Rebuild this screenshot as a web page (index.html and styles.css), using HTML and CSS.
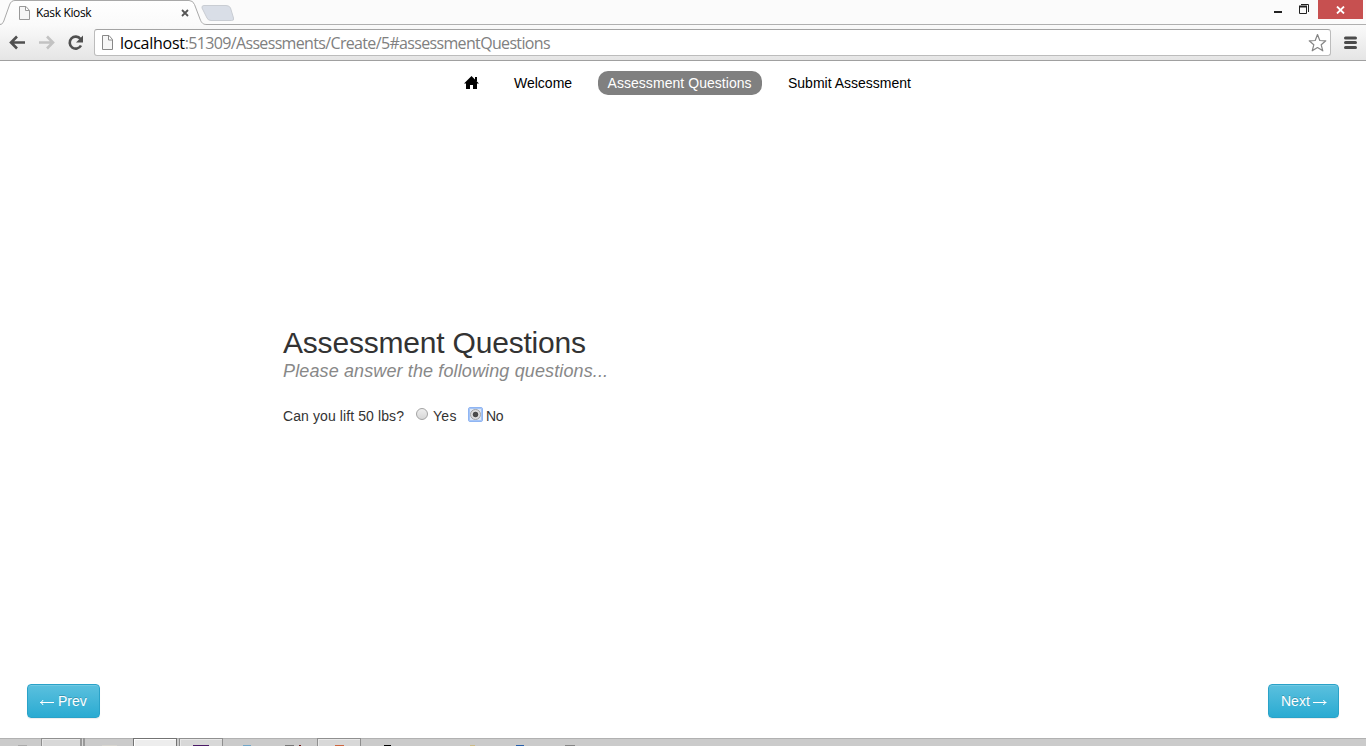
FILE: index.html
```html
<!DOCTYPE html>
<html lang="en">
<head>
<meta charset="utf-8">
<title>Kask Kiosk</title>
<link rel="stylesheet" href="styles.css">
</head>
<body>
<header class="browser">
  <div class="tabstrip">
    <svg class="tab-shape" width="240" height="25" viewBox="0 0 240 25">
      <defs><linearGradient id="tabfill" x1="0" y1="0" x2="0" y2="1"><stop offset="0" stop-color="#fff"/><stop offset="1" stop-color="#fafafa"/></linearGradient></defs>
      <path d="M202 8Q201.500 5.500 204 5.500H226Q229.500 5.500 230.500 8L233.500 18Q234.500 20.500 231.500 20.500H211Q208 20.500 207 18Z" fill="#d9dee7" stroke="#c9cdd3"/>
      <path d="M0 25C3 24 3.500 22 4.500 19L9.500 5Q11 .5 15 .5H189Q193 .5 194.500 4.500L200 19C201.500 23 203 24.500 207 24.500V25Z" fill="url(#tabfill)"/>
      <path d="M0 24.500C3 24 3.500 22 4.500 19L9.500 5Q11 .5 15 .5H189Q193 .5 194.500 4.500L200 19C201.500 23 203 24.500 207 24.500H240" fill="none" stroke="#a9a9a9"/>
    </svg>
    <div class="tab">
      <svg class="tab-page" width="12" height="14" viewBox="0 0 12 14"><path d="M.5.500H7L10.500 4.500V13.500H.5ZM6.500.500V4.500H10.500" fill="#f6f6f6" stroke="#999"/></svg>
      <span class="tab-title">Kask Kiosk</span>
      <svg class="tab-close" width="8" height="8" viewBox="0 0 8 8"><path d="M1 1L7 7M7 1L1 7" stroke="#555" stroke-width="1.800"/></svg>
    </div>
    <div class="window-buttons">
      <svg width="48" height="19" viewBox="0 0 48 19"><path d="M4 11H12V13H4Z" fill="#222"/><path d="M29.500 6.500H36.500V13.500H29.500ZM31 4.500H38.500V12" fill="none" stroke="#222"/><path d="M29 6.500H37" stroke="#222" stroke-width="2"/></svg>
      <div class="window-close"><svg width="9" height="8" viewBox="0 0 9 8"><path d="M1 .5L8 7.500M8 .5L1 7.500" stroke="#fff" stroke-width="1.800"/></svg></div>
    </div>
  </div>
  <div class="toolbar">
    <svg class="nav-icons" width="94" height="36" viewBox="0 0 94 36">
      <path d="M25 17.500H11M17 11.500L11 17.500L17 23.500" fill="none" stroke="#505050" stroke-width="2.600"/>
      <path d="M39 17.500H53M47 11.500L53 17.500L47 23.500" fill="none" stroke="#c2c2c2" stroke-width="2.600"/>
      <path d="M80.500 14A6 6 0 1 0 81 20.500" fill="none" stroke="#505050" stroke-width="2.600"/>
      <path d="M83 10.500V17.500H76Z" fill="#505050"/>
    </svg>
    <div class="address">
      <svg class="address-page" width="12" height="16" viewBox="0 0 12 16"><path d="M.5.500H7L10.500 4.500V14.500H.5ZM6.500.500V5H10.500" fill="#f6f6f6" stroke="#888"/></svg>
      <span class="url"><span class="host">localhost</span>:51309/Assessments/Create/5#assessmentQuestions</span>
      <svg class="star" width="20" height="20" viewBox="0 0 20 20"><path d="M10.500 1.500L12.800 7.500L18.800 7.800L14.200 11.800L15.800 17.800L10.500 14.600L5.200 17.800L6.800 11.800L2.200 7.800L8.200 7.500Z" fill="#fff" stroke="#858585" stroke-width="1.200" stroke-linejoin="round"/></svg>
    </div>
    <svg class="menu" width="14" height="14" viewBox="0 0 14 14"><path d="M2.500 2H12.500M2.500 6.500H12.500M2.500 11.500H12.500" stroke="#4b4b4b" stroke-width="3" stroke-linecap="round"/></svg>
  </div>
</header>
<main class="page">
  <nav class="steps">
    <a class="step-home"><svg width="16" height="14" viewBox="0 0 16 14"><path d="M7.500 0L15 7.500H13V13H9V9H6V13H2V7.500H0ZM11 1H13V5H11Z"/></svg></a>
    <a class="step step-welcome">Welcome</a>
    <a class="step step-active">Assessment Questions</a>
    <a class="step step-submit">Submit Assessment</a>
  </nav>
  <section class="questions">
    <h1 class="title">Assessment Questions</h1>
    <p class="subtitle">Please answer the following questions...</p>
    <div class="question">
      <span class="question-text">Can you lift 50 lbs?</span>
      <span class="radio"></span><span class="answer-yes">Yes</span>
      <span class="focus-box"><span class="radio-checked"></span></span><span class="answer-no">No</span>
    </div>
  </section>
  <footer class="pager">
    <button class="btn btn-prev"><svg width="15" height="9" viewBox="0 0 15 9"><path d="M0 4.500H14M3 2Q2.500 4 .5 4.500Q2.500 5 3 7" fill="none" stroke="#fff" stroke-width="1"/></svg><span class="btn-text">Prev</span></button>
    <button class="btn btn-next"><span class="btn-text">Next</span><svg width="15" height="9" viewBox="0 0 15 9"><path d="M0 4.500H13.500M10.500 2Q11 4 13 4.500Q11 5 10.500 7" fill="none" stroke="#fff" stroke-width="1"/></svg></button>
  </footer>
</main>
<div class="taskbar">
  <div class="task task-first"><i class="tip tip-gray"></i></div>
  <div class="task task-open task-stack"></div>
  <div class="task"><i class="tip tip-pale"></i></div>
  <div class="task task-open task-active"></div>
  <div class="task task-open"><i class="tip tip-purple"></i></div>
  <div class="task"><i class="tip tip-sky"></i></div>
  <div class="task"><i class="tip tip-dark"></i><i class="tip tip-red"></i></div>
  <div class="task task-open"><i class="tip tip-orange"></i></div>
  <div class="task"><i class="tip tip-black"></i></div>
  <div class="task"></div>
  <div class="task"><i class="tip tip-tan"></i></div>
  <div class="task"><i class="tip tip-blue"></i></div>
  <div class="task"><i class="tip tip-slate"></i></div>
</div>
</body>
</html>
```

FILE: styles.css
```css
* { box-sizing: border-box; }
body { margin: 0; width: 1366px; height: 746px; overflow: hidden; display: flex; flex-direction: column; background: #fff; color: #333; font-family: "Liberation Sans", Arial, sans-serif; font-size: 14px; }
svg { display: block; flex: none; }

.browser { height: 61px; flex: none; }
.tabstrip { position: relative; height: 25px; display: flex; justify-content: space-between; background: #fbfbfb; border-bottom: 1px solid #b0b0b0; }
.tab-shape { position: absolute; left: 0; top: 0; }
.tab { position: relative; width: 206px; height: 25px; padding: 1px 0 0 19px; display: flex; align-items: center; font-family: "Open Sans", "Noto Sans", sans-serif; font-size: 12px; color: #000; }
.tab-title { width: 144px; margin-left: 5px; padding-bottom: 2px; letter-spacing: -0.35px; white-space: nowrap; }
.tab-close { margin-left: 1px; }
.window-buttons { display: flex; height: 19px; padding-right: 3px; }
.window-close { width: 45px; height: 19px; display: flex; align-items: center; justify-content: center; background: #c75050; }

.toolbar { height: 36px; display: flex; align-items: center; background: linear-gradient(#fafafa, #e5e5e5); border-bottom: 1px solid #a0a0a0; }
.address { width: 1237px; height: 27px; display: flex; align-items: center; padding: 0 3px 0 7px; background: #fff; border: 1px solid #bcbcbc; border-top-color: #a3a3a3; border-radius: 3px; }
.url { flex: 1; margin-left: 6px; color: #808080; font-family: "Open Sans", "Noto Sans", sans-serif; font-size: 16px; letter-spacing: -0.66px; white-space: nowrap; }
.host { color: #000; letter-spacing: -0.25px; }
.menu { margin-left: 12px; }

.page { flex: 1; display: flex; flex-direction: column; }
.steps { display: flex; align-items: center; height: 44px; padding-left: 464px; color: #000; white-space: nowrap; }
.step-home { width: 40px; padding-bottom: 1px; }
.step { height: 24px; line-height: 24px; padding: 0 10px; }
.step-welcome { width: 94px; }
.step-active { width: 164px; padding: 0 9.5px; letter-spacing: .05px; border-radius: 10px; background: #808080; color: #fff; }
.step-submit { margin-left: 16px; }

.questions { flex: 1; padding: 223px 0 0 283px; }
.title { margin: 0; font-size: 30px; font-weight: 400; line-height: 30px; letter-spacing: -0.2px; }
.subtitle { margin: 0; font-size: 18px; line-height: 26px; font-style: italic; color: #888; letter-spacing: .125px; }
.question { display: flex; align-items: center; height: 20px; margin-top: 22px; white-space: nowrap; }
.question-text { width: 133px; letter-spacing: .1px; }
.radio, .radio-checked { width: 12px; height: 12px; border: 1px solid #a3a3a3; border-radius: 50%; background: linear-gradient(#eee, #d7d7d7); }
.radio { margin-bottom: 4px; }
.answer-yes { width: 35px; margin-left: 5px; letter-spacing: .3px; }
.focus-box { width: 15px; height: 15px; margin-bottom: 3px; display: flex; align-items: center; justify-content: center; background: #dce6f5; border: 1px solid #8fb5f3; border-radius: 2px; box-shadow: inset 0 0 0 1px #a6c5f6; }
.radio-checked { width: 11px; height: 11px; background: radial-gradient(circle, #4b4b4b 0 2.400px, #dedede 3.200px); }
.answer-no { margin-left: 3px; letter-spacing: -.3px; }

.pager { display: flex; justify-content: space-between; padding: 0 27px 20px; }
.btn { height: 34px; display: flex; align-items: center; padding: 0; border: 1px solid #2aa2c8; border-radius: 4px; background: linear-gradient(#5bc0de, #2aabd2); color: #fff; font: 14px "Liberation Sans", Arial, sans-serif; box-shadow: inset 0 1px 0 rgba(255, 255, 255, .15), 0 1px 1px rgba(0, 0, 0, .075); text-shadow: 0 -1px 0 rgba(0, 0, 0, .2); }
.btn-prev { width: 73px; padding: 0 0 0 12px; gap: 3px; }
.btn-next { width: 71px; padding: 0 0 0 12px; gap: 3px; }
.btn svg { margin-top: 3px; }

.taskbar { height: 8px; flex: none; display: flex; gap: 2px; background: #cbcbcb; box-shadow: inset 0 1px 0 #b1b1b1; }
.task { width: 44px; height: 8px; display: flex; align-items: flex-end; flex: none; }
.task-first { width: 39px; }
.task-open { background: #d8d8d8; border: 1px solid #8f8f8f; border-bottom: 0; box-shadow: inset 1px 1px 0 #e8e8e8; }
.task-stack { border-right: 5px double #999; }
.task-active { background: #ededed; border-color: #737373; box-shadow: inset 1px 1px 0 #fff; }
.tip { height: 1px; flex: none; }
.tip-gray { width: 9px; margin-left: 18px; background: #aaa; }
.tip-pale { width: 15px; margin-left: 15px; background: #d7d5cf; }
.tip-purple { width: 16px; margin-left: 13px; background: #4b1a66; }
.tip-sky { width: 8px; margin-left: 18px; background: #71a6c8; }
.tip-dark { width: 9px; margin-left: 14px; background: #777; }
.tip-red { width: 2px; margin-left: 5px; background: #701717; }
.tip-orange { width: 9px; margin-left: 17px; background: #ce6740; }
.tip-black { width: 7px; margin-left: 21px; background: #000; }
.tip-tan { width: 5px; margin-left: 15px; background: #ccba85; }
.tip-blue { width: 8px; margin-left: 15px; background: #285fa9; }
.tip-slate { width: 10px; margin-left: 18px; background: #858585; }
```
